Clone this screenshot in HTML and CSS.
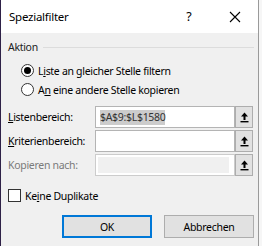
FILE: index.html
```html
<!DOCTYPE html>
<html lang="de">
<head>
    <meta charset="UTF-8">
    <title>Spezialfilter</title>
    <link rel="stylesheet" href="styles.css">
</head>
<body>
    <div class="window">
        <div class="titlebar">
            <span class="title">Spezialfilter</span>
            <span class="help">?</span>
            <span class="close">
                <svg width="12" height="12" viewBox="0 0 12 12"><path d="M1 1 L11 11 M11 1 L1 11" stroke="#000" stroke-width="1.1" fill="none"/></svg>
            </span>
        </div>

        <div class="content">
            <div class="group-head">
                <span>Aktion</span>
                <span class="rule"></span>
            </div>

            <div class="options">
                <div class="option">
                    <span class="radio checked"></span>
                    <span>L<u>i</u>ste an gleicher Stelle filtern</span>
                </div>
                <div class="option">
                    <span class="radio"></span>
                    <span>A<u>n</u> eine andere Stelle kopieren</span>
                </div>
            </div>

            <div class="fields">
                <div class="field">
                    <label><u>L</u>istenbereich:</label>
                    <div class="box"><span class="selected">$A$9:$L$1580</span></div>
                    <button class="pick"><svg width="9" height="11" viewBox="0 0 9 11"><path d="M4.5 0.5 L8 4.5 L5.5 4.5 L5.5 8 L3.5 8 L3.5 4.5 L1 4.5 Z" fill="#000"/><rect x="0.5" y="9" width="8" height="1.4" fill="#000"/></svg></button>
                </div>
                <div class="field">
                    <label><u>K</u>riterienbereich:</label>
                    <div class="box"></div>
                    <button class="pick"><svg width="9" height="11" viewBox="0 0 9 11"><path d="M4.5 0.5 L8 4.5 L5.5 4.5 L5.5 8 L3.5 8 L3.5 4.5 L1 4.5 Z" fill="#000"/><rect x="0.5" y="9" width="8" height="1.4" fill="#000"/></svg></button>
                </div>
                <div class="field disabled">
                    <label>Kopieren nach:</label>
                    <div class="box"><span class="inner"></span></div>
                    <button class="pick"><svg width="9" height="11" viewBox="0 0 9 11"><path d="M4.5 0.5 L8 4.5 L5.5 4.5 L5.5 8 L3.5 8 L3.5 4.5 L1 4.5 Z" fill="#000"/><rect x="0.5" y="9" width="8" height="1.4" fill="#000"/></svg></button>
                </div>
            </div>

            <div class="check-row">
                <span class="checkbox"></span>
                <span>Ke<u>i</u>ne Duplikate</span>
            </div>

            <div class="buttons">
                <button class="btn default">OK</button>
                <button class="btn">Abbrechen</button>
            </div>
        </div>
    </div>
</body>
</html>
```

FILE: styles.css
```css
body {
    margin: 0;
    background: #f6f6f6;
    font-family: "Noto Sans", "Open Sans", sans-serif;
    font-size: 10.5px;
    letter-spacing: -0.3px;
    color: #000;
}
.window {
    width: 259px;
    height: 246px;
    background: #f0f0f0;
    border-left: 1px solid #2e2147;
    border-right: 1px solid #9a9a9a;
    box-sizing: border-box;
    display: flex;
    flex-direction: column;
}
.titlebar {
    height: 33px;
    background: #fff;
    display: flex;
    align-items: center;
    padding-left: 8px;
}
.title {
    flex: 1;
    font-size: 11.5px;
    letter-spacing: -0.25px;
}
.help {
    width: 46px;
    margin-left: 5px;
    text-align: center;
    font-size: 12.5px;
    letter-spacing: 0;
}
.close {
    width: 46px;
    display: flex;
    justify-content: center;
    margin-top: 1px;
}
.content {
    padding: 0 4px 0 7px;
}
.group-head {
    display: flex;
    align-items: center;
    gap: 5px;
    margin-top: 7px;
    height: 14px;
    color: #222;
}
.rule {
    flex: 1;
    height: 0;
    border-top: 1px solid #dcdcdc;
    margin-top: 1px;
}
.options {
    margin-top: 7px;
    padding-left: 13px;
}
.option {
    display: flex;
    align-items: center;
    gap: 4px;
    height: 19px;
}
u {
    text-decoration-thickness: 1px;
    text-underline-offset: 1px;
}
.radio {
    width: 11px;
    height: 11px;
    border: 1px solid #333;
    border-radius: 50%;
    background: #fff;
    display: flex;
    align-items: center;
    justify-content: center;
}
.radio.checked::after {
    content: "";
    width: 7px;
    height: 7px;
    border-radius: 50%;
    background: #000;
}
.fields {
    margin-top: 7px;
    display: flex;
    flex-direction: column;
    gap: 2px;
}
.field {
    display: flex;
    height: 22px;
    align-items: center;
}
.field label {
    width: 87px;
}
.box {
    width: 140px;
    height: 22px;
    box-sizing: border-box;
    border: 1px solid #b4b4b4;
    background: #fff;
    padding: 0 4px;
    display: flex;
    align-items: center;
}
.selected {
    background: #cccccc;
    color: #333;
    line-height: 15px;
}
.pick {
    width: 18px;
    height: 22px;
    box-sizing: border-box;
    border: 1px solid #adadad;
    background: #e1e1e1;
    padding: 0;
    display: flex;
    align-items: center;
    justify-content: center;
}
.disabled label {
    color: #7a7a7a;
}
.disabled .box {
    border-color: #cccccc;
    padding: 2px 5px 2px 2px;
}
.inner {
    display: block;
    width: 100%;
    height: 100%;
    background: #f0f0f0;
}
.check-row {
    display: flex;
    align-items: center;
    gap: 4px;
    margin-top: 13px;
    height: 13px;
}
.checkbox {
    width: 13px;
    height: 13px;
    box-sizing: border-box;
    border: 1px solid #333;
    background: #fff;
}
.buttons {
    display: flex;
    justify-content: flex-end;
    gap: 12px;
    margin-top: 13px;
}
.btn {
    width: 90px;
    height: 23px;
    border: 1px solid #adadad;
    background: #e1e1e1;
    font-family: inherit;
    font-size: 10.5px;
    letter-spacing: -0.3px;
    color: #000;
    padding: 0;
}
.btn.default {
    border: 2px solid #0078d7;
}
```
